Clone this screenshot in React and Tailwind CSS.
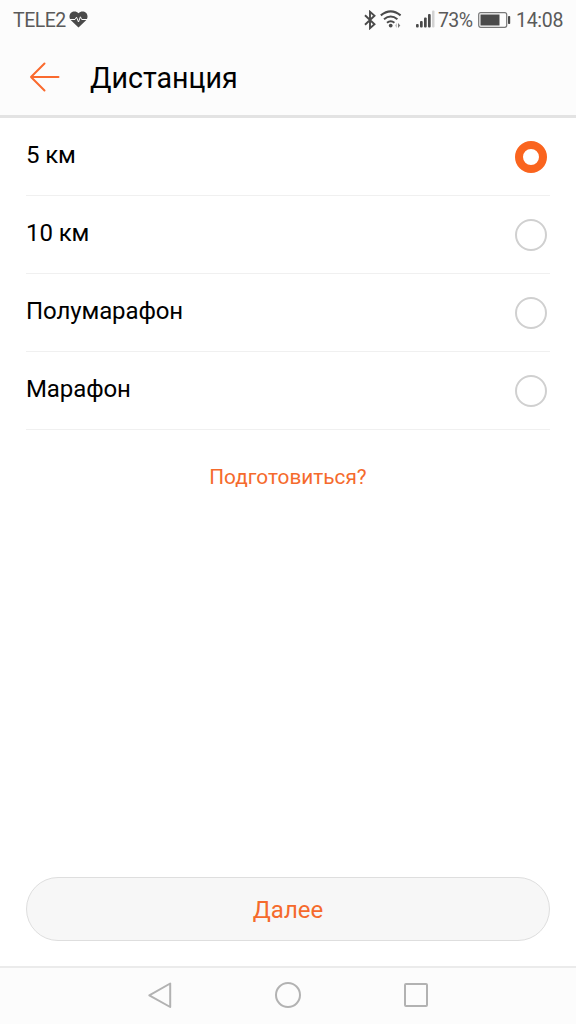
import React, { useState } from "react";

const distances = ["5 км", "10 км", "Полумарафон", "Марафон"];

const HeartRateIcon = () => (
  <svg width="19" height="17" viewBox="0 0 19 17" className="ml-[3px] shrink-0 -translate-y-px">
    <path
      d="M9.500 16.500 1.900 9.200C-.1 7 .1 3.600 2 1.800 4.100-.1 7.500 .1 9.500 2.200 11.500 .1 14.900-.1 17 1.800c1.900 1.800 2.100 5.200.1 7.400Z"
      fill="#4a4a4a"
    />
    <path d="M1 8.500h5l1.500-2.300 2 4.800 1.900-5.200 1.300 2.700H18" fill="none" stroke="#fcfcfc" strokeWidth="1" />
  </svg>
);

const BluetoothIcon = () => (
  <svg width="12" height="20" viewBox="0 0 12 20" className="shrink-0">
    <path d="M1 5.300 10.500 14.200 6 18.200V1.800l4.500 4L1 14.700" fill="none" stroke="#4a4a4a" strokeWidth="1.900" />
  </svg>
);

const WifiIcon = () => (
  <svg width="22" height="18" viewBox="0 0 22 18" className="ml-[4px] shrink-0 -translate-y-px">
    <g fill="none" stroke="#4a4a4a" strokeWidth="2">
      <path d="M.8 5.400Q10.700-2.600 20.600 5.400" />
      <path d="M4 9.200Q10.700 3.700 17.400 9.200" />
      <path d="M7 12.700Q10.700 9.700 14.400 12.700" />
    </g>
    <circle cx="10.700" cy="15.600" r="1.900" fill="#4a4a4a" />
    <path d="m17 13-2 2.500 2 2.500Z" fill="#c4c4c4" />
    <path d="m18 13 2.300 2.500L18 18Z" fill="#777" />
  </svg>
);

const SignalIcon = () => (
  <svg width="19" height="18" viewBox="0 0 19 18" className="ml-[14px] shrink-0 -translate-y-px">
    <g fill="#4a4a4a">
      <rect x="0" y="14" width="2.700" height="3.500" rx="1" />
      <rect x="4" y="11" width="2.700" height="6.500" rx="1" />
      <rect x="8" y="7.500" width="2.700" height="10" rx="1" />
      <rect x="12" y="4" width="2.700" height="13.500" rx="1" />
    </g>
    <rect x="16" y="0.500" width="2.500" height="17" rx="1" fill="#d2d2d2" />
  </svg>
);

const BatteryIcon = () => (
  <svg width="33" height="16" viewBox="0 0 33 16" className="ml-[6px] shrink-0">
    <rect x=".7" y=".7" width="28" height="14.600" rx="2" fill="none" stroke="#777" strokeWidth="1.200" />
    <rect x="2.500" y="2.500" width="19" height="11" fill="#4a4a4a" />
    <rect x="30" y="4" width="2.200" height="8" rx=".8" fill="#4a4a4a" />
  </svg>
);

const StatusBar = () => (
  <div className="flex h-10 shrink-0 items-center justify-between px-[13px] text-[19.500px] text-[#5a5a5a]">
    <div className="flex items-center">
      <span className="w-[53px] whitespace-nowrap pt-[2px] tracking-[-0.500px]">TELE2</span>
      <HeartRateIcon />
    </div>
    <div className="flex items-center">
      <BluetoothIcon />
      <WifiIcon />
      <SignalIcon />
      <span className="ml-[3px] w-[34px] whitespace-nowrap pt-[2px] tracking-[-0.600px]">73%</span>
      <BatteryIcon />
      <span className="ml-[5px] w-[47px] whitespace-nowrap pt-[2px] tracking-[-0.300px]">14:08</span>
    </div>
  </div>
);

const Radio = ({ checked }) => (
  <span
    className={`mr-[3px] h-8 w-8 shrink-0 rounded-full ${
      checked ? "border-8 border-[#fa641e]" : "border-2 border-[#d0d0d0]"
    }`}
  />
);

const App = () => {
  const [selected, setSelected] = useState(0);

  return (
    <div className="flex h-screen w-full flex-col bg-white font-['Roboto',sans-serif] text-black">
      {/* HEADER */}
      <header className="flex h-[118px] shrink-0 flex-col border-b-[3px] border-[#e3e3e3] bg-[#fcfcfc]">
        <StatusBar />
        <div className="flex h-[75px] items-center pl-[29px]">
          <button aria-label="Назад" className="pb-[2px]">
            <svg width="31" height="30" viewBox="0 0 31 30" className="block">
              <path
                d="M15.500 1.500 2 15l13.500 13.500M2 15h27.500"
                fill="none"
                stroke="#fa6a2e"
                strokeWidth="2"
                strokeLinecap="round"
                strokeLinejoin="round"
              />
            </svg>
          </button>
          <h1 className="ml-[30px] pt-px text-[28.600px] leading-8">Дистанция</h1>
        </div>
      </header>

      {/* DISTANCES */}
      <main className="flex grow flex-col px-[26px]">
        {distances.map((label, i) => (
          <button
            key={label}
            onClick={() => setSelected(i)}
            className="flex h-[78px] shrink-0 items-center justify-between border-b border-[#f0f0f0] text-left text-2xl tracking-[-0.1px]"
          >
            <span className="pb-[3px]">{label}</span>
            <Radio checked={selected === i} />
          </button>
        ))}
        <button className="mt-[31px] self-center text-[20.800px] leading-8 text-[#f56a2c]">Подготовиться?</button>

        <button className="mb-[25px] mt-auto h-16 shrink-0 rounded-full border border-[#dedede] bg-[#f7f7f7] pt-[2px] text-2xl text-[#f56a2c]">
          Далее
        </button>
      </main>

      {/* NAVIGATION */}
      <nav className="flex h-[58px] shrink-0 items-center justify-center gap-[100px] border-t-2 border-[#ebebeb] bg-[#fcfcfc] pb-[2px]">
        <svg width="28" height="28" viewBox="0 0 28 28" fill="none" stroke="#b2b2b2" strokeWidth="2" strokeLinejoin="round">
          <path d="M24.200 2.500v23.500L3.300 14.300Z" />
        </svg>
        <svg width="28" height="28" viewBox="0 0 28 28" fill="none" stroke="#b2b2b2" strokeWidth="2">
          <circle cx="14" cy="14" r="12" />
        </svg>
        <svg width="28" height="28" viewBox="0 0 28 28" fill="none" stroke="#b2b2b2" strokeWidth="2">
          <rect x="3" y="3" width="22" height="22" rx="1" />
        </svg>
      </nav>
    </div>
  );
};

export default App;
